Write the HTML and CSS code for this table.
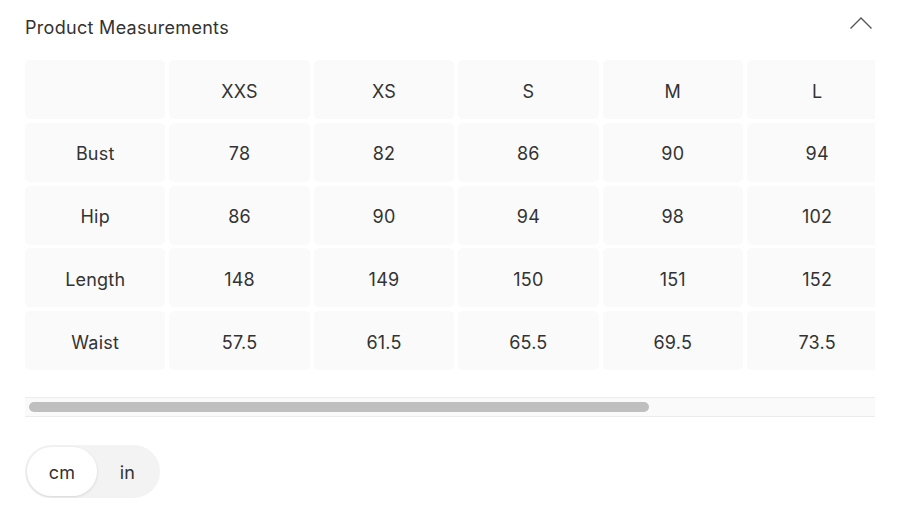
FILE: index.html
```html
<!DOCTYPE html>
<html lang="en">
<head>
<meta charset="utf-8">
<link rel="stylesheet" href="styles.css">
</head>
<body>
<div class="panel">
  <div class="header">
    <h2 class="title">Product Measurements</h2>
    <svg class="chevron" width="24" height="14" viewBox="0 0 24 14"><path d="M1.5 12.5 L12 2 L22.5 12.5" fill="none" stroke="#555" stroke-width="1.4"/></svg>
  </div>
  <div class="scroller">
    <div class="grid">
      <div class="cell"></div>
      <div class="cell">XXS</div>
      <div class="cell">XS</div>
      <div class="cell">S</div>
      <div class="cell">M</div>
      <div class="cell">L</div>

      <div class="cell">Bust</div>
      <div class="cell">78</div>
      <div class="cell">82</div>
      <div class="cell">86</div>
      <div class="cell">90</div>
      <div class="cell">94</div>

      <div class="cell">Hip</div>
      <div class="cell">86</div>
      <div class="cell">90</div>
      <div class="cell">94</div>
      <div class="cell">98</div>
      <div class="cell">102</div>

      <div class="cell">Length</div>
      <div class="cell">148</div>
      <div class="cell">149</div>
      <div class="cell">150</div>
      <div class="cell">151</div>
      <div class="cell">152</div>

      <div class="cell">Waist</div>
      <div class="cell">57.5</div>
      <div class="cell">61.5</div>
      <div class="cell">65.5</div>
      <div class="cell">69.5</div>
      <div class="cell">73.5</div>
    </div>
  </div>
  <div class="track"><div class="thumb"></div></div>
  <div class="units">
    <button class="unit active">cm</button>
    <button class="unit second">in</button>
  </div>
</div>
</body>
</html>
```
FILE: styles.css
```css
html, body {
  margin: 0;
  padding: 0;
  background: #fff;
}
body {
  font-family: "Inter", "Liberation Sans", sans-serif;
  color: #333;
}
.panel {
  width: 850px;
  padding: 0 25px;
}
.header {
  display: flex;
  justify-content: space-between;
  align-items: center;
  height: 54px;
}
.title {
  margin: 0;
  font-size: 18px;
  font-weight: 400;
  letter-spacing: 0.3px;
  color: #333;
}
.chevron {
  margin-right: 2px;
  margin-top: -9px;
}
.scroller {
  margin-top: 6px;
  width: 850px;
  overflow: hidden;
}
.grid {
  display: grid;
  grid-template-columns: repeat(6, 140.4px);
  grid-auto-rows: 59px;
  column-gap: 4px;
  row-gap: 3.75px;
}
.cell {
  background: #fafafa;
  border-radius: 5px;
  display: flex;
  align-items: center;
  justify-content: center;
  padding-top: 3px;
  font-size: 18px;
  letter-spacing: 0.2px;
  color: #333;
}
.track {
  margin-top: 27px;
  height: 18px;
  border-top: 1px solid #ececec;
  border-bottom: 1px solid #ececec;
  background: #fafafa;
  display: flex;
  align-items: center;
  padding-left: 4px;
}
.thumb {
  width: 620px;
  height: 10px;
  border-radius: 5px;
  background: #bfbfbf;
}
.units {
  margin-top: 28px;
  display: inline-flex;
  background: #f3f3f3;
  border-radius: 27px;
  padding: 2px;
}
.unit {
  font-family: inherit;
  font-size: 18px;
  color: #333;
  border: 0;
  background: transparent;
  height: 49px;
  width: 70px;
  border-radius: 25px;
  padding: 0;
  padding-top: 2px;
  letter-spacing: 0.3px;
}
.unit.second {
  width: 61px;
}
.unit.active {
  background: #fff;
  box-shadow: 0 1px 3px rgba(0,0,0,0.12);
}
```
